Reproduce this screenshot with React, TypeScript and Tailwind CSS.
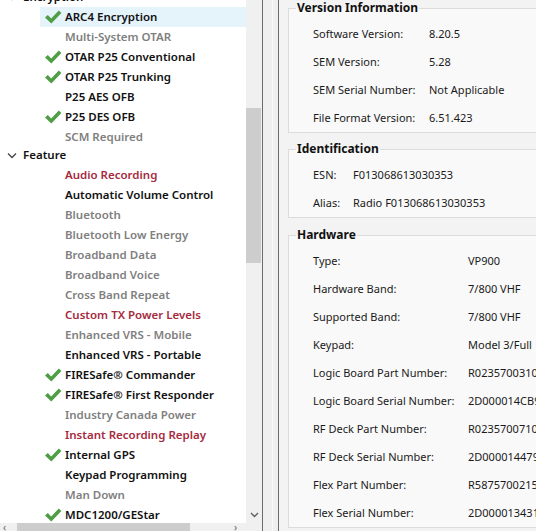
import React from 'react';

type State = 'on' | 'off' | 'dis' | 'warn';

interface Item {
  label: string;
  state: State;
  check?: boolean;
  selected?: boolean;
}

const encryption: Item[] = [
  { label: 'ARC4 Encryption', state: 'on', check: true, selected: true },
  { label: 'Multi-System OTAR', state: 'dis' },
  { label: 'OTAR P25 Conventional', state: 'on', check: true },
  { label: 'OTAR P25 Trunking', state: 'on', check: true },
  { label: 'P25 AES OFB', state: 'on' },
  { label: 'P25 DES OFB', state: 'on', check: true },
  { label: 'SCM Required', state: 'dis' },
];

const features: Item[] = [
  { label: 'Audio Recording', state: 'warn' },
  { label: 'Automatic Volume Control', state: 'on' },
  { label: 'Bluetooth', state: 'dis' },
  { label: 'Bluetooth Low Energy', state: 'dis' },
  { label: 'Broadband Data', state: 'dis' },
  { label: 'Broadband Voice', state: 'dis' },
  { label: 'Cross Band Repeat', state: 'dis' },
  { label: 'Custom TX Power Levels', state: 'warn' },
  { label: 'Enhanced VRS - Mobile', state: 'dis' },
  { label: 'Enhanced VRS - Portable', state: 'on' },
  { label: 'FIRESafe® Commander', state: 'on', check: true },
  { label: 'FIRESafe® First Responder', state: 'on', check: true },
  { label: 'Industry Canada Power', state: 'dis' },
  { label: 'Instant Recording Replay', state: 'warn' },
  { label: 'Internal GPS', state: 'on', check: true },
  { label: 'Keypad Programming', state: 'on' },
  { label: 'Man Down', state: 'dis' },
  { label: 'MDC1200/GEStar', state: 'on', check: true },
];

const versionRows = [
  ['Software Version:', '8.20.5'],
  ['SEM Version:', '5.28'],
  ['SEM Serial Number:', 'Not Applicable'],
  ['File Format Version:', '6.51.423'],
];

const idRows = [
  ['ESN:', 'F013068613030353'],
  ['Alias:', 'Radio F013068613030353'],
];

const hardwareRows = [
  ['Type:', 'VP900'],
  ['Hardware Band:', '7/800 VHF'],
  ['Supported Band:', '7/800 VHF'],
  ['Keypad:', 'Model 3/Full'],
  ['Logic Board Part Number:', 'R0235700310'],
  ['Logic Board Serial Number:', '2D000014CB9'],
  ['RF Deck Part Number:', 'R0235700710'],
  ['RF Deck Serial Number:', '2D000014479'],
  ['Flex Part Number:', 'R5875700215'],
  ['Flex Serial Number:', '2D000013431'],
];

function Check() {
  return (
    <svg width="18" height="16" viewBox="0 0 18 16">
      <path d="M1 8.6 L3.8 6 L7.2 9.4 L14.8 1.4 L17.4 3.9 L7.3 14.6 Z" fill="#4f9e45" />
    </svg>
  );
}

function TreeRow({ item }: { item: Item }) {
  const color =
    item.state === 'dis'
      ? 'text-[#808080]'
      : item.state === 'warn'
        ? 'text-[#a62a40]'
        : 'text-[#111111]';
  return (
    <div className={`flex h-[20px] items-center ml-[40px] ${item.selected ? 'bg-[#e5f3fb]' : ''}`}>
      <div className="w-[25px] flex justify-center">{item.check && <Check />}</div>
      <span className={`font-semibold whitespace-nowrap ${color}`}>{item.label}</span>
    </div>
  );
}

function GroupHeader({ label, className }: { label: string; className?: string }) {
  return (
    <div className={`flex items-center ${className ?? 'h-[20px]'}`}>
      <div className="w-[23px] flex justify-center">
        <svg width="10" height="7" viewBox="0 0 10 7">
          <path d="M1 1.5 L5 5.5 L9 1.5" fill="none" stroke="#444" strokeWidth="1.3" />
        </svg>
      </div>
      <span className="font-semibold text-[#111111]">{label}</span>
    </div>
  );
}

function Group({
  title,
  rows,
  labelWidth,
  className,
}: {
  title: string;
  rows: string[][];
  labelWidth: string;
  className?: string;
}) {
  return (
    <fieldset className={`border border-[#dcdcdc] bg-[#f9f9f9] w-[320px] ${className ?? ''}`}>
      <legend className="ml-[7px] px-[1px] h-[16px] leading-[16px] font-bold text-[12px] text-[#111111]">
        {title}
      </legend>
      <div className="pl-[24px] text-[11px]">
        {rows.map(([k, v]) => (
          <div key={k} className="flex h-[28px] items-center whitespace-nowrap">
            <span className={labelWidth}>{k}</span>
            <span>{v}</span>
          </div>
        ))}
      </div>
    </fieldset>
  );
}

export default function App() {
  return (
    <div className="w-[536px] h-[531px] flex overflow-hidden bg-[#f0f0f0] text-[11.5px] font-['Noto_Sans',sans-serif] text-[#1a1a1a]">
      {/* tree + scrollbars */}
      <div className="flex w-[262px] shrink-0">
        <div className="w-[246px] flex flex-col">
          <div className="flex-1 bg-white overflow-hidden">
            <div className="-mt-[13px]">
              <GroupHeader label="Encryption" />
              {encryption.map((it) => (
                <TreeRow key={it.label} item={it} />
              ))}
              <GroupHeader label="Feature" className="h-[18px] pb-[2px]" />
              {features.map((it) => (
                <TreeRow key={it.label} item={it} />
              ))}
            </div>
          </div>
          <div className="h-[8px] bg-[#f0f0f0] flex items-center relative">
            <span className="absolute left-[3px] -top-[3px] text-[10px] text-[#606060]">‹</span>
            <div className="ml-[17px] w-[173px] h-[8px] bg-[#cdcdcd]" />
            <span className="absolute left-[234px] -top-[3px] text-[10px] text-[#606060]">›</span>
          </div>
        </div>
        <div className="w-[16px] bg-[#f0f0f0] flex flex-col">
          <div className="mt-[108px] h-[155px] w-[15px] bg-[#cdcdcd]" />
          <div className="flex-1" />
          <div className="h-[16px] flex items-center justify-center mb-[8px]">
            <svg width="9" height="6" viewBox="0 0 9 6">
              <path d="M1 1 L4.5 4.5 L8 1" fill="none" stroke="#606060" strokeWidth="1.4" />
            </svg>
          </div>
        </div>
      </div>

      {/* splitter */}
      <div className="w-[17px] shrink-0 border-l border-r border-[#6b6b6b] bg-[#efefef] flex">
        <div className="w-[9px]" />
        <div className="w-[1px] bg-[#fafafa]" />
      </div>

      {/* details */}
      <div className="flex-1 overflow-hidden bg-[#f3f3f3] pl-[9px]">
        <Group title="Version Information" rows={versionRows} labelWidth="w-[116px]" className="pt-[4px]" />
        <Group title="Identification" rows={idRows} labelWidth="w-[40px]" className="mt-[8px] pt-[4px]" />
        <Group title="Hardware" rows={hardwareRows} labelWidth="w-[155px]" className="mt-[9px] pt-[4px]" />
      </div>
    </div>
  );
}
